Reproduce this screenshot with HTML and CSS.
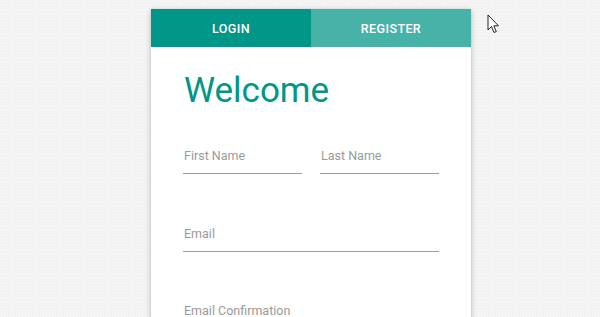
FILE: index.html
```html
<!DOCTYPE html>
<html>
<head>
<meta charset="utf-8">
<link rel="stylesheet" href="styles.css">
</head>
<body>
<div class="stage">
  <div class="card">
    <div class="tabs">
      <div class="tab tab-active">LOGIN</div>
      <div class="tab tab-inactive">REGISTER</div>
    </div>
    <div class="body">
      <h1 class="title">Welcome</h1>
      <div class="row">
        <div class="field"><span class="label">First Name</span></div>
        <div class="field"><span class="label">Last Name</span></div>
      </div>
      <div class="field field-wide"><span class="label">Email</span></div>
      <div class="field field-wide"><span class="label">Email Confirmation</span></div>
    </div>
  </div>
  <svg class="cursor" width="14" height="21" viewBox="0 0 14 21">
    <path d="M1 1 L1 16 L4.5 12.5 L7 18.5 L9.3 17.5 L6.8 11.8 L11.5 11.8 Z" fill="#fff" stroke="#222" stroke-width="1" stroke-linejoin="miter"/>
  </svg>
</div>
</body>
</html>
```
FILE: styles.css
```css
* { box-sizing: border-box; }
html, body { margin: 0; padding: 0; }
body {
  width: 600px;
  height: 317px;
  overflow: hidden;
  background-color: #f3f3f3;
  background-image: radial-gradient(circle, #fbfbfb 0.6px, transparent 0.7px);
  background-size: 3px 3px;
  font-family: Roboto, "Noto Sans", sans-serif;
}
.stage {
  position: relative;
  height: 317px;
  overflow: hidden;
  padding-top: 9px;
  padding-left: 151px;
}
.card {
  width: 320px;
  height: 320px;
  background: #fff;
  box-shadow: 0 2px 6px rgba(0,0,0,0.22), 0 0 3px rgba(0,0,0,0.08);
}
.tabs {
  display: flex;
  height: 38px;
}
.tab {
  flex: 1;
  display: flex;
  align-items: center;
  justify-content: center;
  color: #fff;
  font-size: 12.5px;
  font-weight: 500;
  letter-spacing: 0.4px;
}
.tab-active { background: #009688; }
.tab-inactive { background: #47b3a8; }
.body {
  padding: 0 32px;
}
.title {
  margin: 0;
  padding-top: 24px;
  font-weight: 400;
  font-size: 35px;
  line-height: 40px;
  color: #009688;
  margin-left: 1px;
}
.row {
  display: flex;
  gap: 18px;
  margin-top: 36px;
}
.field {
  flex: 1;
  height: 27px;
  border-bottom: 1px solid #9e9e9e;
  padding-left: 1px;
  padding-top: 2px;
}
.label {
  font-size: 12.5px;
  color: #9a9a9a;
  line-height: 14px;
  display: block;
}
.field-wide {
  margin-top: 50px;
}
.row + .field-wide {
  margin-top: 51px;
}
.cursor {
  position: absolute;
  left: 487px;
  top: 14px;
}
```
